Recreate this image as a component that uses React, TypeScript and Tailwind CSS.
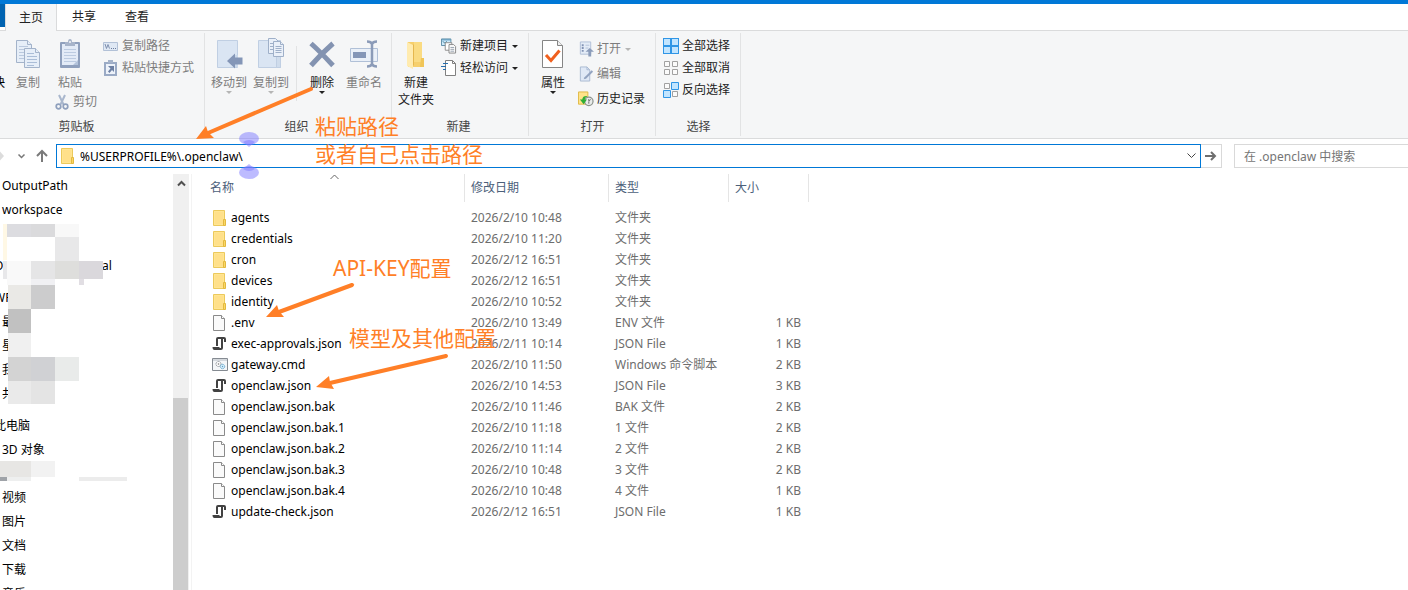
import type { ReactNode } from "react"

interface FileRow {
  name: string
  date: string
  type: string
  size?: string
  icon: "folder" | "file" | "json" | "cmd"
}

const files: FileRow[] = [
  { name: "agents", date: "2026/2/10 10:48", type: "文件夹", icon: "folder" },
  { name: "credentials", date: "2026/2/10 11:20", type: "文件夹", icon: "folder" },
  { name: "cron", date: "2026/2/12 16:51", type: "文件夹", icon: "folder" },
  { name: "devices", date: "2026/2/12 16:51", type: "文件夹", icon: "folder" },
  { name: "identity", date: "2026/2/10 10:52", type: "文件夹", icon: "folder" },
  { name: ".env", date: "2026/2/10 13:49", type: "ENV 文件", size: "1 KB", icon: "file" },
  { name: "exec-approvals.json", date: "2026/2/11 10:14", type: "JSON File", size: "1 KB", icon: "json" },
  { name: "gateway.cmd", date: "2026/2/10 11:50", type: "Windows 命令脚本", size: "2 KB", icon: "cmd" },
  { name: "openclaw.json", date: "2026/2/10 14:53", type: "JSON File", size: "3 KB", icon: "json" },
  { name: "openclaw.json.bak", date: "2026/2/10 11:46", type: "BAK 文件", size: "2 KB", icon: "file" },
  { name: "openclaw.json.bak.1", date: "2026/2/10 11:18", type: "1 文件", size: "2 KB", icon: "file" },
  { name: "openclaw.json.bak.2", date: "2026/2/10 11:14", type: "2 文件", size: "2 KB", icon: "file" },
  { name: "openclaw.json.bak.3", date: "2026/2/10 10:48", type: "3 文件", size: "2 KB", icon: "file" },
  { name: "openclaw.json.bak.4", date: "2026/2/10 10:48", type: "4 文件", size: "1 KB", icon: "file" },
  { name: "update-check.json", date: "2026/2/12 16:51", type: "JSON File", size: "1 KB", icon: "json" },
]

/* ---------- icons ---------- */

const FolderIcon = () => (
  <svg width="16" height="16" viewBox="0 0 16 16">
    <path d="M1.5.5h11v15h-11z" fill="#ffe591" stroke="#ecc95c" />
    <path d="M3 2h8v12H3z" fill="#ffe08a" />
    <path d="M11.5 9.5h2v6h-2z" fill="#fbd765" stroke="#e3b93f" />
  </svg>
)

const FileIcon = () => (
  <svg width="16" height="16" viewBox="0 0 16 16">
    <path d="M1.5.5h8l3 3v12h-11z" fill="#fafafa" stroke="#8a8a8a" />
    <path d="M9.5.5v3h3" fill="#fff" stroke="#8a8a8a" />
  </svg>
)

const JsonIcon = () => (
  <svg width="16" height="16" viewBox="0 0 16 16">
    <path d="M4 10V3q0-2 2-2h6q2 0 2 2v3h-2V3h-1v9q0 2-2 2H2.500Q.5 14 .5 11h7v1h1.500V3H6v7z" fill="#424242" />
  </svg>
)

const CmdIcon = () => (
  <svg width="16" height="16" viewBox="0 0 16 16">
    <path d="M.5 1.5h15v12H.5z" fill="#f4f6f8" stroke="#858b92" />
    <path d="M1 3h14" stroke="#b4bac1" />
    <circle cx="6.500" cy="7" r="2.500" fill="#fff" stroke="#8b8f95" strokeDasharray="1.300 .5" />
    <circle cx="6.500" cy="7" r=".8" fill="#777" />
    <circle cx="10.500" cy="9.500" r="2.200" fill="#d8effb" stroke="#6aa9cf" strokeDasharray="1.300 .4" />
    <circle cx="10.500" cy="9.500" r=".7" fill="#5a9cc4" />
  </svg>
)

const fileIcons = {
  folder: <FolderIcon />,
  file: <FileIcon />,
  json: <JsonIcon />,
  cmd: <CmdIcon />,
}

const CopyIcon = () => (
  <svg width="26" height="32" viewBox="0 0 26 32" fill="#e6eef8" stroke="#a3b3ca">
    <path d="M1.5 2.5h11l4 4v18h-15z" />
    <path d="M12.5 2.5v4h4" />
    <path d="M4 8.5h9M4 11.5h9M4 14.5h9M4 17.5h9M4 20.5h9" stroke="#bac9de" />
    <path d="M9.5 10.5h11l4 4v15h-15z" />
    <path d="M20.5 10.5v4h4" />
    <path d="M12 15.5h7M12 18.5h10M12 21.5h10M12 24.5h10M12 27.5h7" stroke="#aabdd7" />
  </svg>
)

const PasteIcon = () => (
  <svg width="22" height="32" viewBox="0 0 22 32">
    <rect x="1" y="4" width="20" height="26" rx="1" fill="#8fa0bd" />
    <path d="M3 6h16v21H3z" fill="#e3ebf7" />
    <path d="M5 11.5h12M5 14.5h12M5 17.5h12M5 20.5h12M5 23.5h12" stroke="#bccbe1" />
    <path d="M14 27l5-5v5z" fill="#b3c3db" />
    <path d="M6 4h3q0-3 2-3t2 3h3v4H6z" fill="#a7b4ca" />
    <circle cx="11" cy="4" r="1" fill="#f5f6f7" />
  </svg>
)

const MoveToIcon = () => (
  <svg width="28" height="32" viewBox="0 0 28 32">
    <path d="M2.5 2.5h20v27h-20z" fill="#dae5f3" stroke="#c0cfe3" />
    <path d="M20 17h3v12h-3z" fill="#cad8ea" />
    <path d="M12 23l8-7.500v4h7.500v7H20v4z" fill="#8496b7" />
  </svg>
)

const CopyToIcon = () => (
  <svg width="28" height="32" viewBox="0 0 28 32">
    <path d="M1.5 2.5h22v27h-22z" fill="#dae5f3" stroke="#c0cfe3" />
    <path d="M19.5 18.5h4v11h-4z" fill="#cfdcec" stroke="#c0cfe3" />
    <g fill="#eaf0f9" stroke="#9fb0c9">
      <path d="M11.5.5h7l3 3v12h-10z" />
      <path d="M13 5.5h3M13 8.5h3M13 11.5h3" />
      <path d="M16.5 3.5h7l3 3v12h-10z" />
      <path d="M23.5 3.5v3h3M18.5 8.5h6M18.5 10.5h6M18.5 12.5h6M18.5 14.5h6" />
    </g>
  </svg>
)

const DeleteIcon = () => (
  <svg width="28" height="32" viewBox="0 0 28 32" fill="none" stroke="#8393b1" strokeWidth="5">
    <path d="M3 5.5q9 8 22 22M25 5.5Q13 16 3 27.5" />
  </svg>
)

const RenameIcon = () => (
  <svg width="30" height="32" viewBox="0 0 30 32" fill="none">
    <path d="M1.5 10.5h27v13h-27z" fill="#eaf0f8" stroke="#b0c0d7" />
    <path d="M4 14h13v6H4z" fill="#8496b7" />
    <path d="M18 3.5q4 0 5 2.500 1-2.500 5-2.500M23 5v22M18 28.5q4 0 5-2.500 1 2.500 5 2.500" stroke="#8b9bb8" strokeWidth="2.500" />
  </svg>
)

const NewFolderIcon = () => (
  <svg width="22" height="32" viewBox="0 0 22 32">
    <path d="M3 4h14v17h2v8H3z" fill="#f6cf6c" />
    <path d="M9 4h8v20H9z" fill="#fadb82" />
    <path d="M2 4l6 3v24l-6-3z" fill="#ffebaf" />
    <path d="M8 27V7l1-1v22z" fill="#e5b74e" />
    <path d="M16 20h3v9h-4z" fill="#f0c558" />
  </svg>
)

const PropertiesIcon = () => (
  <svg width="24" height="32" viewBox="0 0 24 32">
    <path d="M1.5 2.5h15l5 5v22h-20z" fill="#fff" stroke="#858585" />
    <path d="M16.5 2.5v5h5" fill="#eee" stroke="#858585" />
    <path d="M5 17l5 5.500 8.500-10" fill="none" stroke="#f0601e" strokeWidth="3" />
  </svg>
)

const CutIcon = () => (
  <svg width="14" height="16" viewBox="0 0 14 16" fill="none" stroke="#8fa0bd">
    <path d="M4 1l4.500 9.500M10 1L5.500 10.500" stroke="#a9b7cd" strokeWidth="2" />
    <circle cx="3.500" cy="12.500" r="2.300" strokeWidth="1.700" />
    <circle cx="10.500" cy="12.500" r="2.300" strokeWidth="1.700" />
  </svg>
)

const CopyPathIcon = () => (
  <svg width="16" height="16" viewBox="0 0 16 16">
    <path d="M.5 4.5h14v8H.5z" fill="#dfe8f4" stroke="#b2c1d7" />
    <path d="M2 6l1.500 4.500L5 6.500l1.500 4" fill="none" stroke="#7f90af" />
    <path d="M8 10h1v1H8zM10 10h1v1h-1zM12 10h1v1h-1z" fill="#6c7e9f" />
  </svg>
)

const PasteShortcutIcon = () => (
  <svg width="16" height="16" viewBox="0 0 16 16">
    <path d="M1 2h13v14H1z" fill="#9aaac5" />
    <path d="M3 4h9v10H3z" fill="#edf2fa" />
    <path d="M5 0h5v3H5z" fill="#a5b3ca" />
    <path d="M5 6h6v6L9 10l-2.500 3L5 11.500 7.500 8.500z" fill="#6d80a4" />
  </svg>
)

const NewItemIcon = () => (
  <svg width="17" height="16" viewBox="0 0 17 16">
    <path d="M.5.5h10v7H.5z" fill="#cdeafa" stroke="#5b8ba5" />
    <path d="M1 1.5h9" stroke="#4f8fb4" />
    <path d="M2 3l2 2 2-2" fill="none" stroke="#32718f" />
    <path d="M4.5 4.5h7v8h-7z" fill="#fff" stroke="#8c8c8c" />
    <path d="M8.5 6.5h5l2 2v7h-7z" fill="#fff" stroke="#858585" />
    <path d="M10 9.5h4M10 11.5h4M10 13.5h4" stroke="#8f9ba7" />
  </svg>
)

const EasyAccessIcon = () => (
  <svg width="16" height="16" viewBox="0 0 16 16">
    <path d="M4.5.5h7l3 3v12h-10z" fill="#fff" stroke="#808080" />
    <path d="M11.5.5v3h3" fill="none" stroke="#808080" />
    <path d="M2 3.5h5M0 6.5h5M2 9.5h3" stroke="#286fae" />
  </svg>
)

const OpenIcon = () => (
  <svg width="17" height="16" viewBox="0 0 17 16">
    <path d="M2.5.5h11v13h-11z" fill="#e4ecf7" stroke="#b0bfd6" />
    <path d="M4 3h2v2H4zM4 6h2v2H4zM4 9h2v2H4z" fill="#8294b5" />
    <path d="M8 4h4M8 7h3" stroke="#b3c2d9" />
    <path d="M12.500 7l4.500 4h-3v5h-3v-5H8z" fill="#8b9cba" />
  </svg>
)

const EditIcon = () => (
  <svg width="17" height="16" viewBox="0 0 17 16">
    <path d="M2.5.5h7l3 3v12h-10z" fill="#e0e9f6" stroke="#a9b9d1" />
    <path d="M9.5.5v3h3" fill="none" stroke="#a9b9d1" />
    <path d="M7 11.500L14.500 4l1.500 1.500L8.500 13 6 13.500z" fill="#93a4c1" />
  </svg>
)

const HistoryIcon = () => (
  <svg width="17" height="16" viewBox="0 0 17 16">
    <path d="M.5.5h10v13H.5z" fill="#ffe38a" stroke="#dfb843" />
    <circle cx="11.500" cy="10.500" r="4.500" fill="#e9ecea" stroke="#8b928d" strokeWidth="1.300" />
    <path d="M11.5 8v2.500l2-2M11.5 11v2" fill="none" stroke="#666" />
    <path d="M10 5Q5 4.500 4.500 8.500H2l4 5 3.500-5H7Q7 6.500 10 5z" fill="#2fae35" />
  </svg>
)

const SelectAllIcon = () => (
  <svg width="16" height="16" viewBox="0 0 16 16">
    <path d="M0 0h16v16H0z" fill="#3096e6" />
    <path d="M1 1h6v6H1zM9 1h6v6H9zM1 9h6v6H1zM9 9h6v6H9z" fill="#c2e5ff" />
  </svg>
)

const SelectNoneIcon = () => (
  <svg width="16" height="16" viewBox="0 0 16 16" fill="#fbfbfb" stroke="#a1a1a1">
    <path d="M1.5 1.5h5v5h-5zM9.5 1.5h5v5h-5zM1.5 9.5h5v5h-5zM9.5 9.5h5v5h-5z" />
  </svg>
)

const InvertIcon = () => (
  <svg width="16" height="16" viewBox="0 0 16 16">
    <path d="M1.5 1.5h5v5h-5zM9.5 9.5h5v5h-5z" fill="#fbfbfb" stroke="#a1a1a1" />
    <path d="M8.5.5h7v7h-7zM.5 8.5h7v7h-7z" fill="#c2e5ff" stroke="#3096e6" />
  </svg>
)

const Caret = ({ className = "" }: { className?: string }) => (
  <svg width="6" height="3" viewBox="0 0 6 3" fill="currentColor" className={className}>
    <path d="M0 0h6L3 3z" />
  </svg>
)

/* ---------- ribbon ---------- */

interface ButtonProps {
  icon: ReactNode
  label: ReactNode
  className?: string
  disabled?: boolean
  caret?: boolean
}

const BigButton = ({ icon, label, className = "w-[42px]", disabled, caret }: ButtonProps) => (
  <button
    disabled={disabled}
    className={`flex flex-col items-center pt-[7px] ${className} ${disabled ? "text-[#7d7d7d]" : "text-[#222]"}`}
  >
    <span className="flex h-8 items-center justify-center">{icon}</span>
    <span className="mt-1 whitespace-nowrap leading-[17px]">{label}</span>
    {caret && <Caret className={disabled ? "text-[#b5b5b5]" : "text-[#222]"} />}
  </button>
)

const SmallButton = ({ icon, label, disabled, caret }: ButtonProps) => (
  <button
    disabled={disabled}
    className={`flex h-[22px] items-center gap-[3px] whitespace-nowrap ${disabled ? "text-[#7d7d7d]" : "text-[#222]"}`}
  >
    <span className="flex w-4 shrink-0 justify-center">{icon}</span>
    {label}
    {caret && <Caret className={disabled ? "ml-px text-[#b5b5b5]" : "ml-px text-[#222]"} />}
  </button>
)

interface GroupProps {
  label: string
  className?: string
  labelClass?: string
  children: ReactNode
}

const RibbonGroup = ({ label, className = "", labelClass = "", children }: GroupProps) => (
  <div className="relative flex shrink-0 flex-col justify-between pb-[3px] after:absolute after:top-0.5 after:right-0 after:bottom-0.5 after:w-px after:bg-[#e2e3e4]">
    <div className={`mr-px flex items-start ${className}`}>{children}</div>
    <span className={`text-center leading-4 text-[#444] ${labelClass}`}>{label}</span>
  </div>
)

const Ribbon = () => (
  <div className="flex h-[108px] overflow-hidden border-b border-[#dadbdc] bg-[#f5f6f7]">
    <RibbonGroup label="剪贴板" className="pr-[10px]" labelClass="pr-[52px]">
      <span className="mt-[43px] flex w-1.5 justify-end overflow-hidden pr-px leading-[17px]">快</span>
      <BigButton icon={<CopyIcon />} label="复制" className="w-11" disabled />
      <div className="w-[53px]">
        <BigButton icon={<PasteIcon />} label="粘贴" className="w-10" disabled />
        <div className="pl-1">
          <SmallButton icon={<CutIcon />} label="剪切" disabled />
        </div>
      </div>
      <div className="pt-1">
        <SmallButton icon={<CopyPathIcon />} label="复制路径" disabled />
        <SmallButton icon={<PasteShortcutIcon />} label="粘贴快捷方式" disabled />
      </div>
    </RibbonGroup>

    <RibbonGroup label="组织" className="pr-[6px] pl-[3px]" labelClass="pr-1">
      <BigButton icon={<MoveToIcon />} label="移动到" disabled caret />
      <BigButton icon={<CopyToIcon />} label="复制到" disabled caret />
      <div className="mx-1 mt-[15px] h-[55px] w-px bg-[#e2e3e4]" />
      <BigButton icon={<DeleteIcon />} label="删除" caret />
      <BigButton icon={<RenameIcon />} label="重命名" disabled />
    </RibbonGroup>

    <RibbonGroup label="新建" className="pr-[10px]" labelClass="pr-1">
      <BigButton icon={<NewFolderIcon />} label={<>新建<br />文件夹</>} className="w-12" />
      <div className="pt-1 pl-px">
        <SmallButton icon={<NewItemIcon />} label="新建项目" caret />
        <SmallButton icon={<EasyAccessIcon />} label="轻松访问" caret />
      </div>
    </RibbonGroup>

    <RibbonGroup label="打开" className="pr-[10px]">
      <BigButton icon={<PropertiesIcon />} label="属性" className="w-12" caret />
      <div className="flex flex-col gap-[3px] pt-[7px] pl-px">
        <SmallButton icon={<OpenIcon />} label="打开" disabled caret />
        <SmallButton icon={<EditIcon />} label="编辑" disabled />
        <SmallButton icon={<HistoryIcon />} label="历史记录" />
      </div>
    </RibbonGroup>

    <RibbonGroup label="选择" className="pr-[10px] pl-[7px]">
      <div className="pt-1">
        <SmallButton icon={<SelectAllIcon />} label="全部选择" />
        <SmallButton icon={<SelectNoneIcon />} label="全部取消" />
        <SmallButton icon={<InvertIcon />} label="反向选择" />
      </div>
    </RibbonGroup>
  </div>
)

const Tabs = () => (
  <div className="flex h-[27px] border-b border-[#dadbdc] bg-white leading-6">
    <div className="h-[23px] w-[5px] bg-[#0063b1]" />
    <button className="h-[27px] w-[52px] border-x border-[#dadbdc] bg-[#f5f6f7] text-[#222]">主页</button>
    <button className="w-[54px] text-[#222]">共享</button>
    <button className="w-[52px] text-[#222]">查看</button>
  </div>
)

const AddressBar = () => (
  <div className="flex h-[35px] items-start pt-[5px]">
    <div className="flex h-6 w-14 shrink-0 items-center">
      <svg width="56" height="24" viewBox="0 0 56 24" fill="none">
        <path d="M0 7.500L4 12l-4 4.500z" fill="#dcdcdc" />
        <path d="M18.500 10.500l3 3 3-3" stroke="#777" strokeWidth="1.500" />
        <path d="M42 18V7M37 12l5-5 5 5" stroke="#7a7a7a" strokeWidth="2" />
      </svg>
    </div>
    <div className="flex h-6 flex-1 items-center border border-[#0078d7] bg-white pl-[3px]">
      <FolderIcon />
      <input aria-label="地址" defaultValue="%USERPROFILE%\.openclaw\" className="ml-1 h-5 min-w-0 flex-1 text-black outline-none" />
      <button aria-label="以前的位置" className="px-1">
        <svg width="9" height="6" viewBox="0 0 9 6" fill="none" stroke="#444">
          <path d="M.5.5l4 4 4-4" />
        </svg>
      </button>
    </div>
    <button aria-label="转到" className="flex h-6 w-[21px] items-center justify-center border border-l-0 border-[#d9d9d9]">
      <svg width="12" height="10" viewBox="0 0 12 10" fill="none" stroke="#6e6e6e" strokeWidth="2">
        <path d="M0 5h10M6 1l4 4-4 4" />
      </svg>
    </button>
    <input
      aria-label="搜索"
      placeholder="在 .openclaw 中搜索"
      className="ml-3 h-6 w-[174px] border border-r-0 border-[#d9d9d9] pl-[9px] outline-none placeholder:text-[#757575]"
    />
  </div>
)

/* ---------- navigation pane ---------- */

// pixelated blocks that hide the private folder names
const Mosaic = () => (
  <svg width="130" height="310" viewBox="0 0 130 310" shapeRendering="crispEdges" className="absolute top-[50px] left-0">
    <path d="M3 0h4v36H3z" fill="#fff8e5" />
    <path d="M7 0h24v13H7z" fill="#dcdce0" />
    <path d="M31 0h24v13H31z" fill="#dadadc" />
    <path d="M55 0h24v13H55z" fill="#f8f8f8" />
    <path d="M7 13h48v24H7z" fill="#fff" />
    <path d="M55 13h24v24H55z" fill="#e8e8e9" />
    <path d="M3 37h4v18H3z" fill="#e8e8ea" />
    <path d="M7 37h24v24H7z" fill="#f9f9f9" />
    <path d="M31 37h24v18H31z" fill="#e5e5e6" />
    <path d="M55 37h24v18H55z" fill="#dededc" />
    <path d="M79 37h24v18H79z" fill="#dad8dc" />
    <path d="M31 55h24v6H31z" fill="#f0f0f3" />
    <path d="M79 55h5v6h-5z" fill="#e1dee3" />
    <path d="M8 61h23v24H8z" fill="#eae9e6" />
    <path d="M31 61h24v24H31z" fill="#cccccd" />
    <path d="M8 85h23v24H8z" fill="#c1c1c1" />
    <path d="M8 109h23v24H8z" fill="#f0f0f0" />
    <path d="M8 133h23v24H8z" fill="#d3d3d3" />
    <path d="M31 133h24v24H31z" fill="#d0d1d4" />
    <path d="M55 133h24v24H55z" fill="#e9ebea" />
    <path d="M8 157h23v23H8z" fill="#eaeaea" />
    <path d="M31 157h24v23H31z" fill="#e4e4e4" />
    <path d="M0 237h31v16H0z" fill="#e7e6e4" />
    <path d="M31 237h24v16H31z" fill="#f2f2f2" />
    <path d="M0 253h7v4H0z" fill="#9fa3a8" />
    <path d="M7 253h24v4H7z" fill="#eeefef" />
    <path d="M79 253h48v4H79z" fill="#ececec" />
  </svg>
)

const NavItem = ({ children, className = "" }: { children?: ReactNode; className?: string }) => (
  <a href="#" className={`block h-6 pl-0.5 leading-6 whitespace-nowrap text-black ${className}`}>
    {children}
  </a>
)

const Sidebar = () => (
  <aside className="flex w-48 shrink-0 border-r border-[#f3f3f3]">
    <nav className="relative w-[173px] overflow-hidden">
      <NavItem>OutputPath</NavItem>
      <NavItem>workspace</NavItem>
      <NavItem />
      <NavItem className="mt-2">
        <span className="-ml-2 inline-block w-[108px]">O</span>al
      </NavItem>
      <NavItem className="mt-2">
        <span className="-ml-2">WP</span>
      </NavItem>
      <NavItem>最</NavItem>
      <NavItem>星</NavItem>
      <NavItem>我</NavItem>
      <NavItem>共</NavItem>
      <NavItem className="mt-2">
        <span className="-ml-2">此电脑</span>
      </NavItem>
      <NavItem>3D 对象</NavItem>
      <NavItem />
      <NavItem>视频</NavItem>
      <NavItem>图片</NavItem>
      <NavItem>文档</NavItem>
      <NavItem>下载</NavItem>
      <NavItem>音乐</NavItem>
      <Mosaic />
    </nav>
    <div className="flex w-4 flex-col items-center bg-[#f0f0f0]">
      <svg width="9" height="16" viewBox="0 0 9 16" fill="none" stroke="#505050" strokeWidth="2">
        <path d="M1 11.500L4.500 8 8 11.500" />
      </svg>
      <div className="mt-52 w-full flex-1 border-r border-[#f0f0f0] bg-[#cdcdcd]" />
    </div>
  </aside>
)

/* ---------- file list ---------- */

const FileTable = () => (
  <table className="w-[617px] table-fixed border-collapse self-start text-left text-[#6d6d6d]">
    <colgroup>
      <col className="w-[273px]" />
      <col className="w-36" />
      <col className="w-[120px]" />
      <col className="w-20" />
    </colgroup>
    <thead className="text-[#4c607a]">
      <tr>
        <th className="relative p-0 pb-[5px] font-normal">
          <div className="h-7 border-r border-[#e5e5e5] pl-[18px] leading-7">名称</div>
          <svg width="9" height="6" viewBox="0 0 9 6" fill="none" stroke="#666" className="absolute top-0 left-[138px]">
            <path d="M.5 5l4-4 4 4" />
          </svg>
        </th>
        <th className="p-0 pb-[5px] font-normal">
          <div className="h-7 border-r border-[#e5e5e5] pl-1.5 leading-7">修改日期</div>
        </th>
        <th className="p-0 pb-[5px] font-normal">
          <div className="h-7 border-r border-[#e5e5e5] pl-1.5 leading-7">类型</div>
        </th>
        <th className="p-0 pb-[5px] font-normal">
          <div className="h-7 border-r border-[#e5e5e5] pl-1.5 leading-7">大小</div>
        </th>
      </tr>
    </thead>
    <tbody>
      {files.map((file) => (
        <tr key={file.name} className="h-[21px] leading-5 whitespace-nowrap">
          <td className="p-0 pl-5 text-black">
            <div className="flex items-center gap-[3px]">
              {fileIcons[file.icon]}
              {file.name}
            </div>
          </td>
          <td className="p-0 pl-1.5">{file.date}</td>
          <td className="p-0 pl-1.5">{file.type}</td>
          <td className="p-0 pr-2 text-right">{file.size}</td>
        </tr>
      ))}
    </tbody>
  </table>
)

/* ---------- notes drawn over the window ---------- */

const Annotations = () => (
  <div className="pointer-events-none absolute inset-0 text-[21px] leading-7 whitespace-nowrap text-[#ff7f27]">
    <svg width="520" height="420" viewBox="0 0 520 420" className="absolute top-0 left-0" fill="#ff7f27">
      <g stroke="#ff7f27" strokeWidth="4" strokeLinecap="round">
        <path d="M311 89L208 133" />
        <path d="M352 285L279 312" />
        <path d="M446 356L330 383" />
      </g>
      <path d="M196 139l10-13 2 6 6 6z" />
      <path d="M266 317l11-12 2 6 5 6z" />
      <path d="M316 387l13-11 1 6 4 7z" />
      <g fill="#7b78ff" fillOpacity=".5">
        <ellipse cx="249" cy="138.500" rx="10" ry="6.500" />
        <path d="M243 142q6-4 12 0l-6 5z" />
        <ellipse cx="249" cy="172.500" rx="10" ry="6.500" />
        <path d="M243 169q6 4 12 0l-6-5z" />
      </g>
    </svg>
    <p className="absolute top-28 left-[315px]">
      粘贴路径
      <br />
      或者自己点击路径
    </p>
    <p className="absolute top-[254px] left-[333px]">API-KEY配置</p>
    <p className="absolute top-[324px] left-[349px]">模型及其他配置</p>
  </div>
)

export default function App() {
  return (
    <div className="relative flex h-screen flex-col overflow-hidden bg-white font-['Noto_Sans','Noto_Sans_CJK_SC',sans-serif] text-xs">
      <div className="h-1 shrink-0 bg-[#0078d7]" />
      <div className="shrink-0">
        <Tabs />
        <Ribbon />
        <AddressBar />
      </div>
      <main className="flex min-h-0 flex-1">
        <Sidebar />
        <FileTable />
      </main>
      <Annotations />
    </div>
  )
}
